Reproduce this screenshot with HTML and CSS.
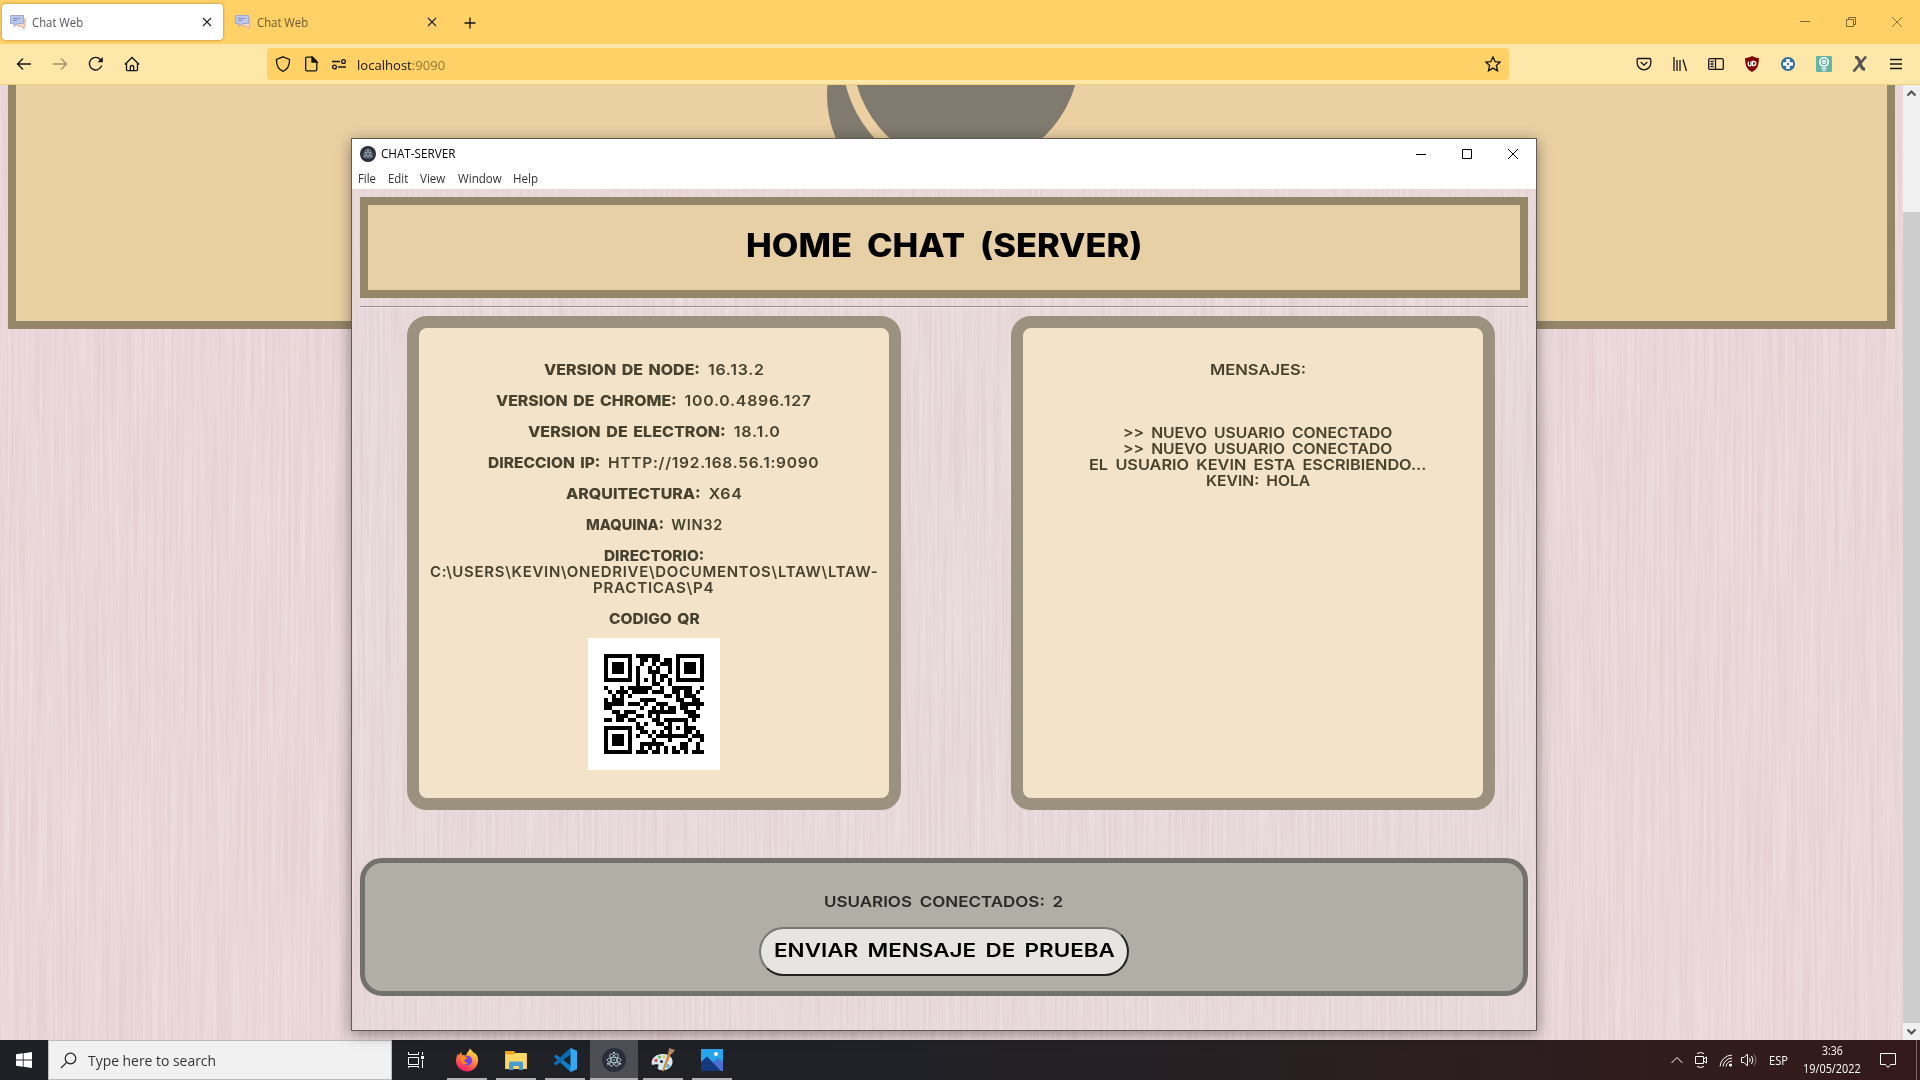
FILE: index.html
```html
<!DOCTYPE html>
<html lang="es">
<head>
<meta charset="utf-8">
<title>Chat Web</title>
<link rel="stylesheet" href="styles.css">
</head>
<body>
<svg width="0" height="0" class="defs">
  <defs>
    <filter id="grain" x="0" y="0" width="100%" height="100%" color-interpolation-filters="sRGB">
      <feTurbulence type="fractalNoise" baseFrequency="0.35 0.006" numOctaves="3" seed="4"/>
      <feColorMatrix values="0.05 0 0 0 0.892  0.09 0 0 0 0.795  0.08 0 0 0 0.808  0 0 0 0 1"/>
    </filter>
    <filter id="grain-win" x="0" y="0" width="100%" height="100%" color-interpolation-filters="sRGB">
      <feTurbulence type="fractalNoise" baseFrequency="0.35 0.006" numOctaves="3" seed="9"/>
      <feColorMatrix values="0.06 0 0 0 0.878  0.09 0 0 0 0.803  0.08 0 0 0 0.813  0 0 0 0 1"/>
    </filter>
    <symbol id="bubble" viewBox="0 0 16 16">
      <path d="M9 5h6v7h-1v3l-3-3H7V9z" fill="#f6d9c6" stroke="#dba995"/>
      <path d="M.5 1.500h13v8H7l-3 3v-3H.5z" fill="#bcc8ea" stroke="#a5a8cf"/>
      <path d="M3 4.500h7M3 6.500h4" stroke="#7d8bc4"/>
    </symbol>
    <symbol id="close" viewBox="0 0 10 10"><path d="M1 1l8 8M9 1L1 9" fill="none" stroke="currentColor" stroke-width="1.1"/></symbol>
    <symbol id="electron" viewBox="0 0 24 24">
      <circle cx="12" cy="12" r="12" fill="#2b2e3a"/>
      <g fill="none" stroke="#b9d5dc" stroke-width=".8">
        <ellipse cx="12" cy="12" rx="7" ry="2.700"/>
        <ellipse cx="12" cy="12" rx="7" ry="2.700" transform="rotate(60 12 12)"/>
        <ellipse cx="12" cy="12" rx="7" ry="2.700" transform="rotate(120 12 12)"/>
      </g>
      <g fill="#d5e8ec"><circle cx="12" cy="12" r=".8"/><circle cx="12" cy="4.800" r="1"/><circle cx="6" cy="15.800" r="1"/><circle cx="18" cy="15.800" r="1"/></g>
    </symbol>
  </defs>
</svg>

<header class="tabs">
  <div class="tab active"><svg class="i16"><use href="#bubble"/></svg><span data-w="51">Chat Web</span><svg class="x"><use href="#close"/></svg></div>
  <div class="tab"><svg class="i16"><use href="#bubble"/></svg><span data-w="51">Chat Web</span><svg class="x"><use href="#close"/></svg></div>
  <svg class="plus" viewBox="0 0 12 12"><path d="M6 .5v11M.5 6h11" stroke="#15141a" stroke-width="1.300"/></svg>
  <div class="winbtns">
    <svg viewBox="0 0 10 10"><path d="M0 4.500h10" stroke="#7d6632"/></svg>
    <svg viewBox="0 0 10 10"><path d="M.5 2.500h7v7h-7zM2.500 2.500v-2h7v7h-2" fill="none" stroke="#7d6632"/></svg>
    <svg viewBox="0 0 10 10"><path d="M0 0l10 10M10 0L0 10" stroke="#7d6632" stroke-width=".9"/></svg>
  </div>
</header>

<nav class="toolbar">
  <div class="nav-left">
    <svg viewBox="0 0 16 16"><path d="M15 8H1.500M7 2.500L1.500 8 7 13.500"/></svg>
    <svg class="dim" viewBox="0 0 16 16"><path d="M1 8h13.500M9 2.500L14.500 8 9 13.500"/></svg>
    <svg viewBox="0 0 16 16"><path d="M13.700 9.500A6.300 6.300 0 1 1 12.800 4"/><path d="M14.800 1v5.300H9.500z" fill="#15141a" stroke="none"/></svg>
    <svg viewBox="0 0 16 16"><path d="M.8 8.500L8 1.500l7.200 7M2.500 7v6.500q0 1.200 1.200 1.200h8.600q1.200 0 1.200-1.200V7M6.300 14.500V11q0-1.500 1.700-1.500T9.700 11v3.500"/></svg>
  </div>
  <div class="urlbar">
    <svg viewBox="0 0 16 16"><path d="M8 .8l6.500 2.700C14.700 9 12.500 13.500 8 15.300 3.500 13.500 1.300 9 1.500 3.500z"/></svg>
    <svg viewBox="0 0 16 16"><path d="M4 1.200h5.500L13.800 5.500V13.500q0 1.300-1.300 1.300H4q-1.300 0-1.300-1.300v-11Q2.700 1.200 4 1.200z"/><path d="M9 1v5h5z" fill="#15141a"/></svg>
    <svg viewBox="0 0 16 16"><path d="M1 5.500h8M7 11h8"/><circle cx="12.500" cy="5.500" r="1.900"/><circle cx="3.500" cy="11" r="1.900"/></svg>
    <span class="url" data-w="88.500">localhost<i>:9090</i></span>
    <svg class="star" viewBox="0 0 16 16"><path d="M8 .9l2.100 4.700 5.100.5-3.800 3.400 1.100 5.300L8 12.100l-4.500 2.700 1.100-5.300L.8 6.100l5.100-.5z"/></svg>
  </div>
  <div class="nav-right">
    <svg viewBox="0 0 16 16"><path d="M2.500 2.500h11q1.300 0 1.300 1.300V7A6.800 6.800 0 0 1 1.200 7V3.800Q1.200 2.500 2.500 2.500zM4.700 6L8 9.200 11.300 6"/></svg>
    <svg viewBox="0 0 16 16"><path d="M2 1v14M5 4v11M8 4v11M11 3.500L14.500 15"/></svg>
    <svg viewBox="0 0 16 16"><path d="M2 2.700h12q1.300 0 1.300 1.200v8.300q0 1.200-1.300 1.200H2Q.7 13.400.7 12.200V3.900Q.7 2.700 2 2.700zM7.500 3v10M2.500 5.500H5.500M2.500 8H5.500M2.500 10.500H5.500"/></svg>
    <svg viewBox="0 0 16 16"><path d="M8 0q3 2 6.800 2C15 8 14 13 8 16 2 13 1 8 1.200 2 5 2 8 0 8 0z" fill="#800000" stroke="none"/><path d="M4.300 5.500v3q0 1.300 1.400 1.300T7 8.500v-3M8.500 9.500v-4h1.300q2 0 2 2t-2 2z" stroke="#fff"/></svg>
    <svg viewBox="0 0 16 16"><circle cx="8" cy="8" r="7" fill="#2a6e9c" stroke="none"/><path d="M8 3v10M3 8h10" stroke="#fff" stroke-width="3.600"/><circle cx="8" cy="8" r="1.200" fill="#2a6e9c" stroke="none"/></svg>
    <svg viewBox="0 0 16 16"><rect width="16" height="16" rx="1" fill="#66b5a0" stroke="none"/><circle cx="8" cy="6" r="4.200" stroke="#fff" stroke-width="1.600"/><circle cx="8" cy="6" r="1.500" stroke="#fff"/><path d="M5.500 12.500h5M6.500 14.700h3" stroke="#fff"/></svg>
    <svg viewBox="0 0 16 16"><path d="M3 1Q6.500 1 8 7t5 6.500" stroke="#555" stroke-width="3.200"/><path d="M14 .5L1.500 15.500" stroke="#555" stroke-width="2.600"/></svg>
    <svg viewBox="0 0 16 16"><path d="M2 3.500h12M2 8h12M2 12.500h12"/></svg>
  </div>
</nav>

<main class="page">
  <div class="site">
    <svg class="texture"><rect width="100%" height="100%" filter="url(#grain)"/></svg>
    <div class="hero">
      <svg class="logo" viewBox="0 0 300 236">
        <circle cx="137" cy="10" r="110" fill="#807b6e"/>
        <circle cx="166" cy="-30.300" r="124" fill="#ebd0a4"/>
        <circle cx="166" cy="-30.300" r="113.200" fill="#807b6e"/>
      </svg>
    </div>
  </div>
  <div class="scroll">
    <svg viewBox="0 0 17 17"><path d="M4.500 10.500l4-4 4 4"/></svg>
    <div class="thumb"></div>
    <svg viewBox="0 0 17 17"><path d="M4.500 6.500l4 4 4-4"/></svg>
  </div>
</main>

<section class="window">
  <div class="titlebar">
    <svg class="i16"><use href="#electron"/></svg><span data-w="74">CHAT-SERVER</span>
    <div class="ctl">
      <svg viewBox="0 0 10 10"><path d="M0 5.500h10"/></svg>
      <svg viewBox="0 0 10 10"><path d="M.5 .5h9v9h-9z"/></svg>
      <svg viewBox="0 0 10 10"><path d="M0 0l10 10M10 0L0 10"/></svg>
    </div>
  </div>
  <div class="menu"><span data-w="18">File</span><span data-w="20">Edit</span><span data-w="25">View</span><span data-w="43.500">Window</span><span data-w="25">Help</span></div>
  <div class="app">
    <svg class="texture"><rect width="100%" height="100%" filter="url(#grain-win)"/></svg>
    <div class="banner"><h1 data-w="396">HOME CHAT (SERVER)</h1></div>
    <hr>
    <div class="panels">
      <div class="panel info">
        <p><span data-w="221"><b>VERSION DE NODE:</b> 16.13.2</span></p>
        <p><span data-w="316"><b>VERSION DE CHROME:</b> 100.0.4896.127</span></p>
        <p><span data-w="252.500"><b>VERSION DE ELECTRON:</b> 18.1.0</span></p>
        <p><span data-w="331"><b>DIRECCION IP:</b> HTTP://192.168.56.1:9090</span></p>
        <p><span data-w="176.500"><b>ARQUITECTURA:</b> X64</span></p>
        <p><span data-w="137"><b>MAQUINA:</b> WIN32</span></p>
        <p><span data-w="100.500"><b>DIRECTORIO:</b></span><br><span data-w="449">C:\USERS\KEVIN\ONEDRIVE\DOCUMENTOS\LTAW\LTAW-</span><br><span data-w="121.500">PRACTICAS\P4</span></p>
        <p><span data-w="91"><b>CODIGO QR</b></span></p>
        <svg class="qr" id="qr" viewBox="-4 -4 33 33" shape-rendering="crispEdges"></svg>
      </div>
      <div class="panel messages">
        <p><span data-w="96">MENSAJES:</span></p>
        <div class="log">
          <div><span data-w="269.500">&gt;&gt; NUEVO USUARIO CONECTADO</span></div>
          <div><span data-w="269.500">&gt;&gt; NUEVO USUARIO CONECTADO</span></div>
          <div><span data-w="337">EL USUARIO KEVIN ESTA ESCRIBIENDO...</span></div>
          <div><span data-w="104.500">KEVIN: HOLA</span></div>
        </div>
      </div>
    </div>
    <div class="status">
      <p><span data-w="239">USUARIOS CONECTADOS: 2</span></p>
      <button><span data-w="341">ENVIAR MENSAJE DE PRUEBA</span></button>
    </div>
  </div>
</section>

<footer class="taskbar">
  <div class="start"><svg viewBox="0 0 16 16"><path d="M0 2.200L6.800 1.300V7.600H0zM7.600 1.200L16 0v7.600H7.600zM0 8.400h6.800v6.300L0 13.800zM7.600 8.400H16V16l-8.400-1.200z" fill="#fff"/></svg></div>
  <div class="search"><svg viewBox="0 0 17 17"><circle cx="10.500" cy="6.500" r="5.300"/><path d="M6.700 10.300L1 16"/></svg><span data-w="128">Type here to search</span></div>
  <div class="apps">
    <div class="app-btn idle"><svg class="tv" viewBox="0 0 16 16"><path d="M.5 0v2.500h10V0M.5 5.500h10v7H.5zM.5 16v-1.500h10V16M14.500 0v3M14.500 8v8"/><path d="M13 4h3v3h-3z" fill="#fff" stroke="none"/></svg></div>
    <div class="app-btn"><svg viewBox="0 0 24 24">
      <defs><linearGradient id="ff" x1=".8" y1="0" x2=".3" y2="1"><stop offset="0" stop-color="#fff44f"/><stop offset=".4" stop-color="#ff9640"/><stop offset="1" stop-color="#f5156c"/></linearGradient></defs>
      <path d="M15 .5c1 2 3.500 3 4 5.500 0-.8 0-1 .2-1.500C22.500 7 23.500 10 23 13.500 22.300 19.500 17.500 23.500 12 23.500S1 19 1 13c0-3.500 1-5.500 2-7.500l.8 2L6 4l1 3 4 .5C12 4 14 3.500 15 .5z" fill="url(#ff)"/>
      <circle cx="12.300" cy="12.500" r="4.800" fill="#7542e5"/><path d="M6 7.500l6 1.500q.5 2-3 3 1 3 4.500 2.800-3.500 2.700-6.500.2-2-2.500-1-7.500z" fill="#ff8a16"/></svg></div>
    <div class="app-btn"><svg viewBox="0 0 24 24"><path d="M1 3h9l2 2.500h11V21H1z" fill="#e9a820"/><path d="M1.500 6.500H10l2-1.500h10.500V21h-21z" fill="#ffd968"/><path d="M5 22v-7q0-1.500 1.500-1.500h11q1.500 0 1.500 1.500v7h-4v-4H9.500v4z" fill="#4a9bd4"/></svg></div>
    <div class="app-btn"><svg viewBox="0 0 24 24"><path d="M17.500 0L24 3v18l-6.500 3L1 8.500 3 6.500 18 18z" fill="#0f7fc9"/><path d="M17.500 0v6.500L3 17.500l-2.500-2z" fill="#0a6cb5"/><path d="M17.500 0L24 3v18l-6.500 3z" fill="#33a8f0"/></svg></div>
    <div class="app-btn current"><svg><use href="#electron"/></svg></div>
    <div class="app-btn"><svg viewBox="0 0 24 24"><path d="M1 17c-2-6 4-12 12-11 6 .5 9 4 8.500 8.500C21 20 15 23 9.500 22c-3-.5-3.500-2.500-2-4 1-2-3-2-6.500-1z" fill="#d5e9f1"/><circle cx="5" cy="12.500" r="1.700" fill="#e34f43"/><circle cx="8.500" cy="9" r="1.600" fill="#6cb45d"/><circle cx="13" cy="8.500" r="1.500" fill="#e9c443"/><circle cx="10.500" cy="13.500" r="1.500" fill="#27303b"/><circle cx="17" cy="18" r="2" fill="#6bb3df"/><path d="M20 4.500L12.500 23l-.8-.4L18 4z" fill="#d08733" stroke="#d08733"/><path d="M18 0l6 2-3 4-3.500-.5z" fill="#b58a61"/></svg></div>
    <div class="app-btn"><svg viewBox="0 0 24 24"><path d="M1 1h22v22H1z" fill="#29a3e9"/><path d="M23 23V14l-5-4-5 4 4 9z" fill="#4a6fd4"/><path d="M1 14l6-5.500L21 23H1z" fill="#133a7c"/><circle cx="16" cy="6" r="2" fill="#fff"/></svg></div>
  </div>
  <div class="tray">
    <svg style="width:12px" viewBox="0 0 12 8"><path d="M.5 7L6 1.500 11.500 7"/></svg>
    <svg style="width:12px" viewBox="0 0 12 16"><path d="M.5 4.500h8v7h-8zM8.500 7l3-2v6l-3-2M2 1.500q4-2 7 0M2 14.500q4 2 7 0"/></svg>
    <svg style="width:14px" viewBox="0 0 14 14"><path d="M1 13.500A12.500 12.500 0 0 1 13 2M4 13.500A9.500 9.500 0 0 1 13 5M7 13.500A6.500 6.500 0 0 1 13 8"/><circle cx="11.500" cy="12" r="1.600" fill="#fff" stroke="none"/></svg>
    <svg style="width:16px" viewBox="0 0 16 14"><path d="M.5 4.500H3l3.500-3.500v12L3 9.500H.5zM8.500 5q1.500 2 0 4M10.500 3q3 4 0 8"/><path d="M13 1.500q4 5.500 0 11" stroke="#8a7f7f"/></svg>
    <span class="lang" data-w="18.500">ESP</span>
    <div class="clock"><span data-w="21">3:36</span><span data-w="58">19/05/2022</span></div>
    <svg class="note" viewBox="0 0 16 17"><path d="M.5 1.500h15v11H10.500L8 15.500 5.500 12.500H.5z"/></svg>
    <div class="peek"></div>
  </div>
</footer>
<script src="app.js"></script>
</body>
</html>
```
FILE: styles.css
```css
* { box-sizing: border-box; }
html, body { height: 100%; }
body {
  margin: 0;
  display: flex;
  flex-direction: column;
  overflow: hidden;
  position: relative;
  font: 12px "Open Sans", "Noto Sans", sans-serif;
  color: #15141a;
}
svg { display: block; flex: none; }
.defs { position: absolute; }
[data-w] { display: inline-block; white-space: nowrap; transform-origin: 0 50%; flex: none; }
.i16 { width: 16px; height: 16px; }

/* browser chrome */
.tabs { flex: none; height: 44px; background: #ffd167; display: flex; align-items: center; padding: 0 18px 0 2px; }
.tab { width: 221px; height: 36px; margin-right: 4px; padding: 0 11px 0 8px; border-radius: 4px; display: flex; align-items: center; gap: 6px; color: #6a5930; }
.tab.active { background: #fff; color: #55555c; box-shadow: 0 0 3px #a8853a; }
.tab .x { width: 10px; height: 10px; margin-left: auto; color: #222; }
.plus { width: 12px; height: 12px; margin: 1px 0 0 12px; }
.winbtns { margin-left: auto; display: flex; gap: 36px; }
.winbtns svg { width: 10px; height: 10px; }
.toolbar { flex: none; height: 41px; background: #ffe6a9; border-bottom: 1px solid #f5cf7c; display: flex; align-items: center; }
.toolbar svg { width: 16px; height: 16px; fill: none; stroke: #15141a; stroke-width: 1.3; }
.toolbar .dim { opacity: .4; }
.nav-left { width: 267px; padding-left: 16px; display: flex; gap: 20px; }
.urlbar { width: 1242px; height: 32px; background: #ffd167; border-radius: 4px; display: flex; align-items: center; padding: 0 8px; gap: 12px; }
.url { font-size: 13px; margin-left: -2px; padding-top: 2px; }
.url i { font-style: normal; color: #94793b; }
.urlbar .star { margin-left: auto; }
.nav-right { flex: 1; display: flex; justify-content: space-between; padding: 0 16px 0 127px; }

/* page behind the window */
.page { flex: 1; display: flex; min-height: 0; }
.site { flex: 1; position: relative; padding: 0 8px; overflow: hidden; background: #ebd7d9; }
.texture { position: absolute; inset: 0; width: 100%; height: 100%; }
.hero { position: relative; height: 244px; background: #ebd0a4; border: 8px solid #95866a; border-top: 0; padding-left: 784px; }
.logo { width: 300px; height: 236px; }
.scroll { width: 17px; background: #f0f0f0; display: flex; flex-direction: column; }
.scroll svg { width: 17px; height: 17px; fill: none; stroke: #555; stroke-width: 2.2; }
.thumb { flex: 1; margin-top: 110px; background: #cdcdcd; }

/* server window */
.window { position: absolute; left: 351px; top: 138px; width: 1186px; height: 893px; border: 1px solid #645a54; background: #fff; display: flex; flex-direction: column; box-shadow: 0 3px 14px rgba(0,0,0,.42); }
.titlebar { height: 29px; padding: 0 18px 0 8px; display: flex; align-items: center; gap: 5px; color: #000; }
.ctl { margin-left: auto; display: flex; gap: 36px; }
.ctl svg { width: 10px; height: 10px; fill: none; stroke: #000; }
.menu { height: 21px; padding-left: 6px; display: flex; gap: 12px; line-height: 22px; color: #333; }
.app { flex: 1; position: relative; padding: 8px; display: flex; flex-direction: column; font: 600 15px/16px Inter, "Liberation Sans", sans-serif; background: #e8dada; }
.app > :not(.texture) { position: relative; }
.app [data-w] { word-spacing: 3px; }
.banner { height: 101px; border: 8px solid #95866a; background: #e7d0a6; display: flex; justify-content: center; padding-top: 21px; }
h1 { margin: 0; font-size: 32px; line-height: 40px; font-weight: 800; color: #000; }
.banner [data-w] { height: 40px; word-spacing: 7px; }
hr { width: 100%; height: 2px; margin: 8px 0; border: 0; border-top: 1px solid #909092; border-bottom: 1px solid #efe8e8; }
.panels { display: flex; justify-content: space-between; padding: 0 33px 0 47px; height: 494px; color: #47422f; }
.panel { border: 12px solid #9b917f; border-radius: 20px; background: #f3e4c9; text-align: center; padding-top: 34px; }
.info { width: 494px; }
.messages { width: 484px; padding-left: 10px; }
.panel p { margin: 0 0 15px; }
.info [data-w] { letter-spacing: .7px; }
.info b { font-weight: 800; letter-spacing: 0; word-spacing: 2px; }
.qr { width: 132px; height: 132px; margin: -4px auto 0; background: #fff; }
.log { margin-top: 47px; }
.status { margin-top: 48px; height: 138px; border: 5px solid #72716c; border-radius: 22px; background: #b1aea6; display: flex; flex-direction: column; align-items: center; color: #2b2827; }
.status p { margin: 31px 0 0; height: 16px; }
button { margin: 17px 0 0; width: 370px; height: 49px; padding: 0 0 3px; border: 2px solid; border-color: #777 #222 #222 #777; border-radius: 25px; background: #e6e5e1; font: 600 18.500px/24px Inter, sans-serif; color: #000; }

/* taskbar */
.taskbar { flex: none; height: 40px; background: linear-gradient(90deg, #1f2026 0, #202228 45%, #2c1f20 75%, #351a1a 100%); display: flex; color: #fff; }
.start { width: 48px; display: flex; align-items: center; justify-content: center; }
.start svg { width: 16px; height: 16px; }
.search { width: 344px; background: #f1f1f1; border: 1px solid #bbb; display: flex; align-items: center; padding-left: 11px; gap: 11px; font-size: 15px; color: #333; }
.search svg { width: 17px; height: 17px; fill: none; stroke: #222; stroke-width: 1.2; }
.apps { display: flex; gap: 1px; }
.app-btn { width: 48px; display: flex; align-items: center; justify-content: center; position: relative; }
.app-btn svg { width: 24px; height: 24px; }
.app-btn::after { content: ""; position: absolute; left: 4px; right: 4px; bottom: 0; height: 2px; background: #b7b2b2; }
.app-btn.idle { margin-right: 2px; }
.app-btn.idle::after { display: none; }
.app-btn.current { background: #4d4e53; }
.app-btn.current::after { left: 0; right: 0; }
.app-btn .tv { width: 16px; height: 16px; fill: none; stroke: #fff; }
.tray { margin-left: auto; display: flex; align-items: center; }
.tray svg { height: 16px; margin-right: 12px; fill: none; stroke: #fff; }
.tray svg:nth-child(3) { margin-right: 8px; }
.clock { width: 72px; margin: 0 12px 0 8px; display: flex; flex-direction: column; align-items: center; line-height: 18px; }
.tray .note { width: 16px; height: 17px; margin: 0 20px 0 0; }
.peek { width: 4px; height: 40px; border-left: 1px solid #776465; }
```
FILE: app.js
```js
document.querySelectorAll('[data-w]').forEach(el => {
  const want = parseFloat(el.dataset.w), have = el.offsetWidth;
  el.style.transform = `scaleX(${want / have})`;
  el.style.marginRight = `${want - have}px`;
});

// QR code, version 2, error correction M.
const N = 25;
const ALNUM = '0123456789ABCDEFGHIJKLMNOPQRSTUVWXYZ $%*+-./:';

function encodeData(head, tail) {
  let bits = '';
  const put = (v, n) => { bits += v.toString(2).padStart(n, '0'); };
  put(4, 4); put(head.length, 8);
  for (const c of head) put(c.charCodeAt(0), 8);
  if (tail) {
    put(2, 4); put(tail.length, 9);
    for (let i = 0; i < tail.length; i += 2) {
      if (i + 1 < tail.length) put(ALNUM.indexOf(tail[i]) * 45 + ALNUM.indexOf(tail[i + 1]), 11);
      else put(ALNUM.indexOf(tail[i]), 6);
    }
  }
  put(0, Math.min(4, 224 - bits.length));
  while (bits.length % 8) bits += '0';
  const out = bits.match(/.{8}/g).map(b => parseInt(b, 2));
  for (let i = 0; out.length < 28; i++) out.push(i % 2 ? 17 : 236);
  return out;
}

function mul(a, b) {
  let r = 0;
  for (; b; b >>= 1) {
    if (b & 1) r ^= a;
    a <<= 1;
    if (a & 256) a ^= 285;
  }
  return r;
}

function errorWords(data, n) {
  let g = [1], root = 1;
  for (let i = 0; i < n; i++) {
    const next = new Array(g.length + 1).fill(0);
    g.forEach((c, j) => { next[j] ^= c; next[j + 1] ^= mul(c, root); });
    g = next;
    root = mul(root, 2);
  }
  const rem = data.concat(new Array(n).fill(0));
  for (let i = 0; i < data.length; i++) {
    const f = rem[i];
    if (f) g.forEach((c, j) => { rem[i + j] ^= mul(c, f); });
  }
  return rem.slice(data.length);
}

const MASKS = [
  (r, c) => (r + c) % 2, (r, c) => r % 2, (r, c) => c % 3, (r, c) => (r + c) % 3,
  (r, c) => ((r >> 1) + Math.floor(c / 3)) % 2, (r, c) => r * c % 2 + r * c % 3,
  (r, c) => (r * c % 2 + r * c % 3) % 2, (r, c) => (r * c % 3 + (r + c) % 2) % 2
];

function build(words, mask) {
  const m = [], fixed = [];
  for (let i = 0; i < N; i++) { m.push(new Array(N).fill(0)); fixed.push(new Array(N).fill(false)); }
  const set = (r, c, v) => {
    if (r < 0 || c < 0 || r >= N || c >= N) return;
    m[r][c] = v ? 1 : 0; fixed[r][c] = true;
  };
  for (const [y, x] of [[3, 3], [3, N - 4], [N - 4, 3]])
    for (let i = -4; i <= 4; i++) for (let j = -4; j <= 4; j++) {
      const d = Math.max(Math.abs(i), Math.abs(j));
      set(y + i, x + j, d !== 2 && d !== 4);
    }
  for (let i = -2; i <= 2; i++) for (let j = -2; j <= 2; j++)
    set(18 + i, 18 + j, Math.max(Math.abs(i), Math.abs(j)) !== 1);
  for (let i = 8; i < N - 8; i++) { set(6, i, i % 2 === 0); set(i, 6, i % 2 === 0); }
  let rem = mask << 10;
  for (let i = 14; i >= 10; i--) if (rem >> i & 1) rem ^= 0x537 << (i - 10);
  const fmt = (mask << 10 | rem) ^ 0x5412;
  for (let i = 0; i < 15; i++) {
    const b = fmt >> i & 1;
    set(i < 6 ? i : i < 8 ? i + 1 : N - 15 + i, 8, b);
    set(8, i < 8 ? N - 1 - i : i < 9 ? 7 : 14 - i, b);
  }
  set(N - 8, 8, 1);
  const bits = words.map(w => w.toString(2).padStart(8, '0')).join('');
  let k = 0, up = true;
  for (let col = N - 1; col > 0; col -= 2) {
    if (col === 6) col--;
    for (let s = 0; s < N; s++) {
      const r = up ? N - 1 - s : s;
      for (const c of [col, col - 1]) if (!fixed[r][c]) {
        const v = k < bits.length ? +bits[k] : 0; k++;
        m[r][c] = v ^ (MASKS[mask](r, c) === 0 ? 1 : 0);
      }
    }
    up = !up;
  }
  return m;
}

function penalty(m) {
  let p = 0, dark = 0;
  const lines = m.map(r => r.join('')).concat(m.map((_, c) => m.map(r => r[c]).join('')));
  for (const l of lines) {
    for (const run of l.match(/0+|1+/g)) if (run.length >= 5) p += run.length - 2;
    for (let i = 0; i + 11 <= N; i++) {
      const s = l.substr(i, 11);
      if (s === '10111010000' || s === '00001011101') p += 40;
    }
  }
  for (let r = 0; r < N; r++) for (let c = 0; c < N; c++) {
    dark += m[r][c];
    if (r < N - 1 && c < N - 1) {
      const s = m[r][c] + m[r + 1][c] + m[r][c + 1] + m[r + 1][c + 1];
      if (s === 0 || s === 4) p += 3;
    }
  }
  return p + Math.abs(Math.ceil(dark * 100 / (N * N) / 5) - 10) * 10;
}

const data = encodeData('http', '://192.168.56.1:9090');
const words = data.concat(errorWords(data, 16));
const best = MASKS.map((_, i) => build(words, i)).sort((a, b) => penalty(a) - penalty(b))[0];
let d = '';
best.forEach((row, y) => row.forEach((v, x) => { if (v) d += `M${x} ${y}h1v1h-1z`; }));
document.getElementById('qr').innerHTML = `<path d="${d}"/>`;
```
